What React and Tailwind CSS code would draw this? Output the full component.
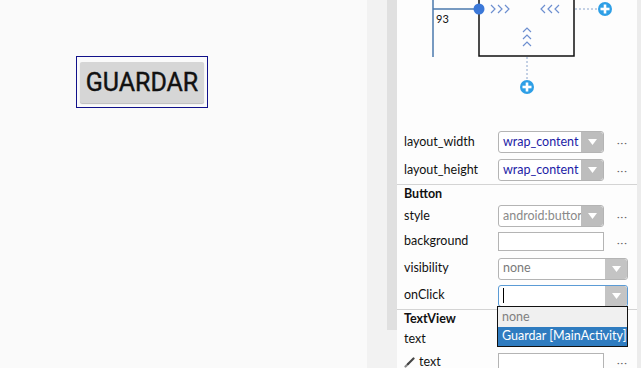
import React from 'react';

const ui = { fontFamily: 'Lato, "Noto Sans", sans-serif' };

function Chevron({ x, y, dir }) {
  // small chevron, 4 wide x 8 tall, pointing right / left / up
  if (dir === 'right') return <polyline points={`${x},${y - 4} ${x + 4},${y} ${x},${y + 4}`} fill="none" stroke="#6d8fd0" strokeWidth="1.2" />;
  if (dir === 'left') return <polyline points={`${x + 4},${y - 4} ${x},${y} ${x + 4},${y + 4}`} fill="none" stroke="#6d8fd0" strokeWidth="1.2" />;
  return <polyline points={`${x - 4},${y + 2} ${x},${y - 2} ${x + 4},${y + 2}`} fill="none" stroke="#6d8fd0" strokeWidth="1.2" />;
}

function PlusDot({ cx, cy }) {
  return (
    <g>
      <circle cx={cx} cy={cy} r="7" fill="#2e9fe6" />
      <rect x={cx - 4.5} y={cy - 1.3} width="9" height="2.6" fill="#fff" />
      <rect x={cx - 1.3} y={cy - 4.5} width="2.6" height="9" fill="#fff" />
    </g>
  );
}

function Blueprint() {
  return (
    <svg width="240" height="128" viewBox="0 0 240 128" className="block">
      <line x1="36" y1="0" x2="36" y2="57" stroke="#4a78ad" strokeWidth="1.5" />
      <line x1="36" y1="9" x2="82" y2="9" stroke="#4a78ad" strokeWidth="1.5" />
      <text x="39" y="23" fontSize="11" fill="#111" style={ui}>93</text>
      <polyline points="82,-2 82,56 177,56 177,-2" fill="none" stroke="#111" strokeWidth="1.5" />
      <circle cx="82" cy="9" r="5.5" fill="#3b78d8" />
      <Chevron x={94} y={9} dir="right" />
      <Chevron x={101} y={9} dir="right" />
      <Chevron x={108} y={9} dir="right" />
      <Chevron x={144} y={9} dir="left" />
      <Chevron x={151} y={9} dir="left" />
      <Chevron x={158} y={9} dir="left" />
      <Chevron x={130} y={30} dir="up" />
      <Chevron x={130} y={37} dir="up" />
      <Chevron x={130} y={44} dir="up" />
      <line x1="178" y1="9" x2="201" y2="9" stroke="#8aa4cc" strokeWidth="1" strokeDasharray="2 2" />
      <line x1="130" y1="57" x2="130" y2="80" stroke="#8aa4cc" strokeWidth="1" strokeDasharray="2 2" />
      <PlusDot cx={208} cy={9} />
      <PlusDot cx={130} cy={87} />
    </svg>
  );
}

function Arrow({ light }) {
  return (
    <div className={`flex w-[22px] items-center justify-center self-stretch rounded-r-[3px] ${light ? 'bg-[#c4c4c4]' : 'bg-[#bdbdbd]'}`}>
      <svg width="9" height="6" viewBox="0 0 9 6">
        <polygon points="0,0 9,0 4.5,6" fill="#fff" />
      </svg>
    </div>
  );
}

function Dots() {
  return <span className="ml-[13px] text-[10px] leading-none text-[#666] tracking-[1px]">···</span>;
}

function Select({ value, color = 'text-[#777]', wide, focus, caret }) {
  return (
    <div className="flex items-center">
      <div
        className={`flex h-[22px] items-stretch rounded-[3px] bg-white ${wide ? 'w-[130px]' : 'w-[106px]'} ${focus ? 'border border-[#5b9bd5]' : 'border border-[#b4b4b4]'}`}
      >
        <div className={`flex min-w-0 flex-1 items-center overflow-hidden whitespace-nowrap pl-[4px] text-[12.5px] ${color}`}>
          {caret && <span className="inline-block h-[15px] w-[1px] bg-black" />}
          {value}
        </div>
        <Arrow light={wide} />
      </div>
      {!wide && <Dots />}
    </div>
  );
}

function Input() {
  return (
    <div className="flex items-center">
      <div className="h-[19px] w-[106px] border border-[#b4b4b4] bg-white" />
      <Dots />
    </div>
  );
}

function Row({ h, label, children, icon }) {
  return (
    <div className={`flex items-center ${h}`}>
      <div className="flex w-[101px] items-center pl-[7px] text-[12.5px] text-[#111]">
        {icon}
        {label}
      </div>
      {children}
    </div>
  );
}

function Brush() {
  return (
    <svg width="11" height="11" viewBox="0 0 11 11" className="mr-[4px]">
      <line x1="1.5" y1="9.5" x2="4" y2="7" stroke="#888" strokeWidth="2.2" strokeLinecap="round" />
      <line x1="4" y1="7" x2="9.5" y2="1.5" stroke="#444" strokeWidth="2.2" strokeLinecap="round" />
    </svg>
  );
}

export default function App() {
  return (
    <div className="flex h-[368px] w-[641px] overflow-hidden" style={ui}>
      {/* design canvas */}
      <div className="w-[367px] bg-[#fafafa] pl-[76px] pt-[56px]">
        <div className="inline-flex border border-[#11118a] px-[3px] pb-[4px] pt-[5px]">
          <div
            className="flex h-[41px] w-[124px] items-center justify-center rounded-[2px] bg-[#d6d6d6] shadow-[0_1px_1px_rgba(0,0,0,0.25)] text-[25px] font-normal text-[#111]"
            style={{ fontFamily: 'Roboto, sans-serif', WebkitTextStroke: '0.4px #111' }}
          >
            GUARDAR
          </div>
        </div>
      </div>

      {/* splitter + scrollbar */}
      <div className="w-[20px] bg-[#f2f2f2]" />
      <div className="flex w-[10px] flex-col bg-[#f2f2f2]">
        <div className="h-[330px] bg-[#e0e0e0]" />
      </div>

      {/* properties panel */}
      <div className="relative flex-1 bg-[#fdfdfd]">
        <Blueprint />
        <Row h="h-[28px]" label="layout_width">
          <Select value="wrap_content" color="text-[#1c1ca6]" />
        </Row>
        <Row h="h-[28px]" label="layout_height">
          <Select value="wrap_content" color="text-[#1c1ca6]" />
        </Row>
        <div className="mr-[4px] border-t border-[#d4d4d4]" />
        <div className="flex h-[19px] items-center pl-[7px] text-[12.5px] font-bold text-[#111]">Button</div>
        <Row h="h-[24px]" label="style">
          <Select value="android:buttor" color="text-[#8a8a8a]" />
        </Row>
        <Row h="h-[27px]" label="background">
          <Input />
        </Row>
        <Row h="h-[27px]" label="visibility">
          <Select value="none" color="text-[#7a7a7a]" wide />
        </Row>
        <Row h="h-[27px]" label="onClick">
          <Select value="" wide focus caret />
        </Row>
        <div className="mr-[4px] border-t border-[#d4d4d4]" />
        <div className="flex h-[19px] items-center pl-[7px] text-[12.5px] font-bold text-[#111]">TextView</div>
        <Row h="h-[20px]" label="text" />
        <Row h="h-[26px]" label="text" icon={<Brush />}>
          <Input />
        </Row>

        {/* open dropdown list for onClick */}
        <div className="absolute left-[100px] top-[306px] w-[131px] whitespace-nowrap border border-[#111] bg-white text-[12.5px]">
          <div className="flex h-[20px] items-center bg-[#f0f0f0] pl-[4px] text-[#808080]">none</div>
          <div className="flex h-[19px] items-center bg-[#2f7cc0] pl-[4px] text-white">Guardar [MainActivity]</div>
        </div>

        {/* panel scrollbar edge */}
        <div className="absolute right-0 top-0 h-full w-[4px] bg-[#ececec]" />
      </div>
    </div>
  );
}
